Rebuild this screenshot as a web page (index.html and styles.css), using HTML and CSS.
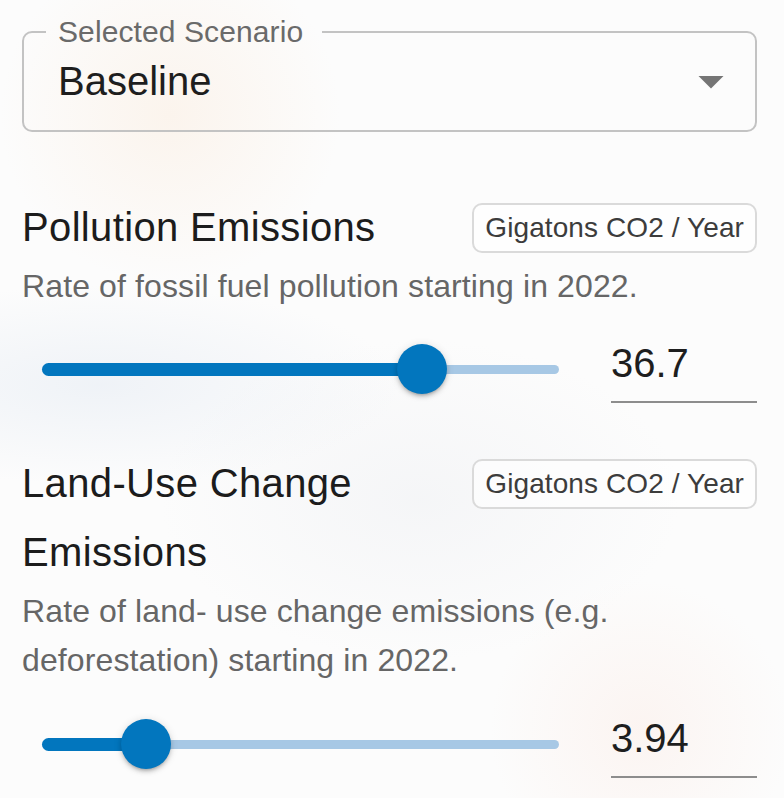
FILE: index.html
```html
<!DOCTYPE html>
<html lang="en">
<head>
<meta charset="utf-8">
<title>Scenario Controls</title>
<link rel="stylesheet" href="styles.css">
</head>
<body>
<div class="page">
  <fieldset class="select">
    <legend class="select-label">Selected Scenario</legend>
    <div class="select-row">
      <span class="select-value">Baseline</span>
      <svg class="select-arrow" viewBox="0 0 24 24" width="60" height="60" aria-hidden="true"><path d="M7 10l5 5 5-5z" fill="#757575"/></svg>
    </div>
  </fieldset>

  <section class="control first">
    <div class="control-head">
      <h2 class="control-title">Pollution Emissions</h2>
      <span class="chip">Gigatons CO2 / Year</span>
    </div>
    <p class="control-desc">Rate of fossil fuel pollution starting in 2022.</p>
    <div class="slider-row">
      <div class="slider">
        <div class="rail"><div class="fill" style="width:73.5%"></div></div>
        <span class="thumb" style="left:73.5%"></span>
      </div>
      <div class="value">36.7</div>
    </div>
  </section>

  <section class="control second">
    <div class="control-head">
      <h2 class="control-title">Land-Use Change Emissions</h2>
      <span class="chip">Gigatons CO2 / Year</span>
    </div>
    <p class="control-desc">Rate of land- use change emissions (e.g. deforestation) starting in 2022.</p>
    <div class="slider-row">
      <div class="slider">
        <div class="rail"><div class="fill" style="width:20.1%"></div></div>
        <span class="thumb" style="left:20.1%"></span>
      </div>
      <div class="value">3.94</div>
    </div>
  </section>
</div>
</body>
</html>
```

FILE: styles.css
```css
html, body {
  margin: 0;
  padding: 0;
}
body {
  width: 784px;
  height: 798px;
  overflow: hidden;
  font-family: "Liberation Sans", Arial, Helvetica, sans-serif;
  color: #1e1e1e;
  background:
    radial-gradient(circle at 170px 115px, rgba(250, 232, 214, 0.4), rgba(250, 232, 214, 0) 170px),
    radial-gradient(ellipse 300px 100px at 100px 385px, rgba(226, 233, 242, 0.5), rgba(226, 233, 242, 0)),
    radial-gradient(ellipse 260px 160px at 420px 500px, rgba(234, 236, 240, 0.4), rgba(234, 236, 240, 0)),
    radial-gradient(circle at 640px 730px, rgba(250, 226, 216, 0.3), rgba(250, 226, 216, 0) 150px),
    #fcfcfc;
}
.page {
  padding: 0 27px 0 22px;
}

/* Select */
.select {
  margin: 15px 0 0;
  padding: 0 14px 17px 22px;
  border: 2px solid #c3c3c3;
  border-radius: 10px;
  min-width: 0;
}
.select-label {
  padding: 0 19px 0 12px;
  font-size: 30px;
  line-height: 34px;
  letter-spacing: 0.1px;
  color: #6a6a6a;
}
.select-row {
  height: 64px;
  display: flex;
  align-items: center;
  justify-content: space-between;
  padding-left: 12px;
}
.select-value {
  font-size: 40px;
  line-height: 46px;
  color: #1e1e1e;
}
.select-arrow {
  display: block;
}

/* Controls */
.control.first {
  margin-top: 61px;
}
.control.second {
  margin-top: 46px;
}
.control-head {
  display: flex;
  align-items: flex-start;
  justify-content: space-between;
  gap: 20px;
}
.control-title {
  margin: 0;
  font-size: 40px;
  line-height: 69px;
  font-weight: 400;
  letter-spacing: 0.35px;
  color: #1c1c1c;
}
.chip {
  flex-shrink: 0;
  margin-top: 10px;
  height: 50px;
  box-sizing: border-box;
  padding: 0 11px;
  border: 2px solid #dadada;
  border-radius: 10px;
  background: rgba(255, 255, 255, 0.6);
  font-size: 28px;
  line-height: 46px;
  letter-spacing: 0.1px;
  color: #3c3c3c;
}
.control-desc {
  margin: 0;
  font-size: 32px;
  line-height: 49px;
  letter-spacing: 0.12px;
  color: #666666;
}
.slider-row {
  display: flex;
  align-items: flex-start;
  gap: 52px;
  padding-left: 20px;
  margin-top: 29px;
}
.second .slider-row {
  margin-top: 30px;
}
.slider {
  position: relative;
  flex: 1;
  height: 50px;
  margin-top: 4px;
  display: flex;
  align-items: center;
}
.rail {
  flex: 1;
  height: 9px;
  border-radius: 5px;
  background: #a7c8e5;
  display: flex;
  align-items: center;
}
.fill {
  height: 13px;
  border-radius: 7px;
  background: #0276be;
}
.thumb {
  position: absolute;
  top: 50%;
  width: 50px;
  height: 50px;
  border-radius: 50%;
  background: #0276be;
  transform: translate(-50%, -50%);
  box-shadow: 0 3px 3px -2px rgba(0, 0, 0, 0.2), 0 3px 4px 0 rgba(0, 0, 0, 0.14), 0 1px 8px 0 rgba(0, 0, 0, 0.12);
}
.value {
  width: 146px;
  flex-shrink: 0;
  font-size: 40px;
  line-height: 46px;
  padding-bottom: 15px;
  border-bottom: 2px solid #8d8d8d;
  color: #1e1e1e;
}
```
